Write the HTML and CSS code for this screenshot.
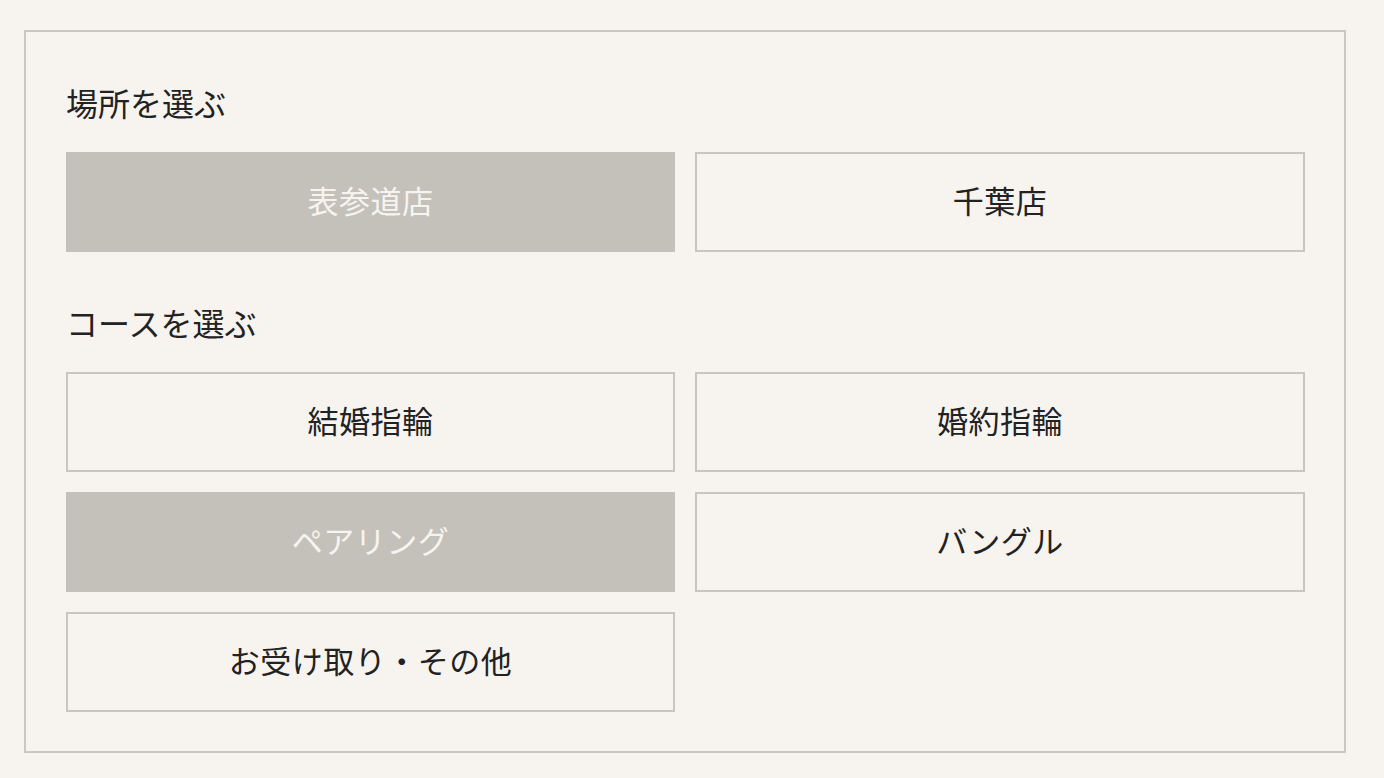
FILE: index.html
```html
<!DOCTYPE html>
<html lang="ja">
<head>
<meta charset="utf-8">
<link rel="stylesheet" href="styles.css">
</head>
<body>
<div class="panel">
  <div class="label">場所を選ぶ</div>
  <div class="grid">
    <div class="btn selected">表参道店</div>
    <div class="btn">千葉店</div>
  </div>
  <div class="label second">コースを選ぶ</div>
  <div class="grid">
    <div class="btn">結婚指輪</div>
    <div class="btn">婚約指輪</div>
    <div class="btn selected">ペアリング</div>
    <div class="btn">バングル</div>
    <div class="btn">お受け取り・その他</div>
  </div>
</div>
</body>
</html>
```
FILE: styles.css
```css
html, body {
  margin: 0;
  background: #f7f4f0;
}
body {
  padding: 30px 38px 0 24px;
  font-family: "Noto Sans CJK JP", "Noto Sans", sans-serif;
  color: #222;
}
.panel {
  border: 2px solid #cbc8c3;
  height: 723px;
  box-sizing: border-box;
  padding: 46px 40px 40px 40px;
  width: 1322px;
}
.label {
  font-size: 32px;
  line-height: 48px;
  margin-bottom: 26px;
  padding-left: 0;
}
.label.second {
  margin-top: 46px;
}
.grid {
  display: grid;
  grid-template-columns: 609px 610px;
  column-gap: 20px;
  row-gap: 20px;
}
.btn {
  height: 100px;
  box-sizing: border-box;
  border: 2px solid #c9c6c1;
  padding-bottom: 6px;
  display: flex;
  align-items: center;
  justify-content: center;
  font-size: 31px;
  letter-spacing: 0.5px;
}
.btn.selected {
  background: #c4c1ba;
  border-color: #c4c1ba;
  color: #f7f4f0;
}
```
